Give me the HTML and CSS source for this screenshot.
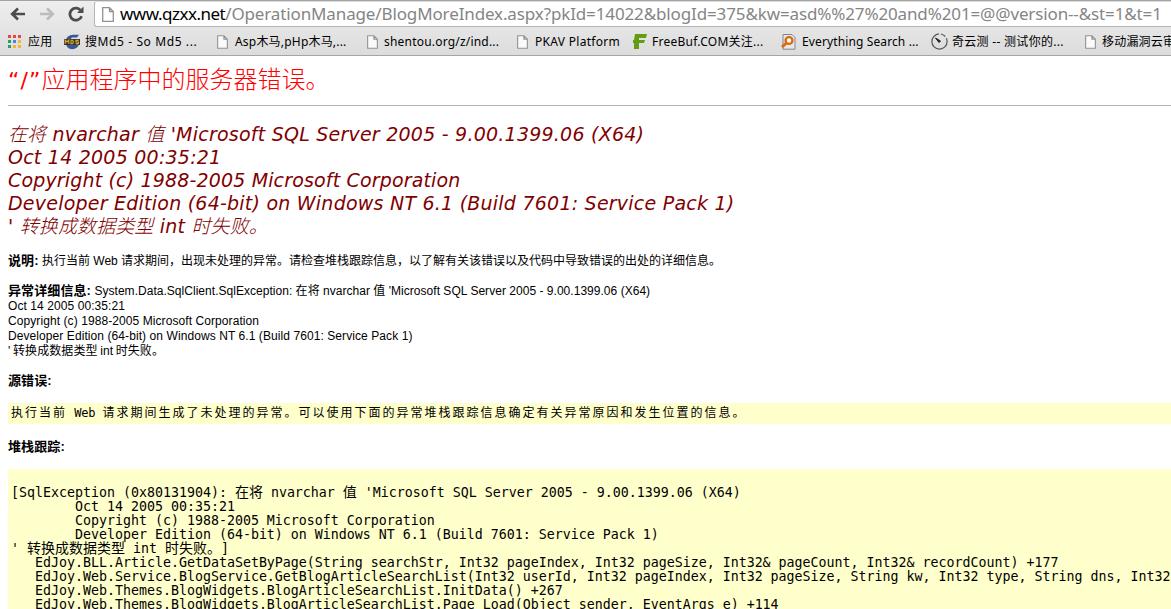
FILE: index.html
```html
<!DOCTYPE html>
<html lang="zh-CN">
<head>
<meta charset="utf-8">
<title>“/”应用程序中的服务器错误。</title>
<link rel="stylesheet" href="styles.css">
</head>
<body>
<header class="chrome">
  <div class="toolbar">
    <svg class="nav back" width="16" height="14" viewBox="0 0 16 14"><path d="M15 7H3M8 1.5L2.2 7L8 12.5" fill="none" stroke="#4c4c4c" stroke-width="2.7"/></svg>
    <svg class="nav forward" width="16" height="14" viewBox="0 0 16 14"><path d="M1 7H13M8 1.5L13.8 7L8 12.5" fill="none" stroke="#bcbcbc" stroke-width="2.7"/></svg>
    <svg class="nav reload" width="16" height="16" viewBox="0 0 16 16"><path d="M13.6 10.2A6 6 0 1 1 12.2 3.9" fill="none" stroke="#4c4c4c" stroke-width="2.8"/><path d="M15.5 .5V7H9Z" fill="#4c4c4c"/></svg>
    <div class="address">
      <svg class="page" width="12" height="15" viewBox="0 0 12 15"><path d="M.7.7H7.5L11.3 4.5V14.3H.7ZM7.5.7V4.5H11.3" fill="#fff" stroke="#929292" stroke-width="1.3"/></svg>
      <div class="url"><span class="host">www.qzxx.net</span><span class="path">/OperationManage/BlogMoreIndex.aspx?pkId=14022&amp;blogId=375&amp;kw=asd%%27%20and%201=@@version--&amp;st=1&amp;t=1</span></div>
    </div>
  </div>
  <nav class="bookmarks">
    <a class="bm apps"><svg width="13" height="13" viewBox="0 0 13 13"><path fill="#e8453c" d="M0 0h3v3H0zM5 0h3v3H5zM10 0h3v3h-3z"/><path fill="#2ca05a" d="M0 5h3v3H0zM0 10h3v3H0z"/><path fill="#4285f4" d="M5 5h3v3H5z"/><path fill="#f9b32f" d="M10 5h3v3h-3zM5 10h3v3H5zM10 10h3v3h-3z"/></svg><span>应用</span></a>
    <a class="bm md5"><svg width="16" height="16" viewBox="0 0 16 16"><path d="M2 6Q3 1 9 .8H15L13 3.5H8L6 6ZM2 10H15Q14 15 8 15.2Q3 15 2 10Z" fill="#35599a"/><path d="M0 5H16V11H0Z" fill="#3b3527"/><path d="M1.2 10V6.2L3 8L4.8 6.2V10M7 6.5V9.6H8.5L9.6 8L8.5 6.4H7M14.6 6.4H12V8H14.4V9.6H11.6" fill="none" stroke="#d9a92f" stroke-width="1.1"/></svg><span>搜Md5 - So Md5 ...</span></a>
    <a class="bm asp"><svg class="page" width="11" height="14" viewBox="0 0 12 15"><path d="M.7.7H7.5L11.3 4.5V14.3H.7ZM7.5.7V4.5H11.3" fill="#fafafa" stroke="#929292" stroke-width="1.2"/></svg><span>Asp木马,pHp木马,...</span></a>
    <a class="bm shentou"><svg class="page" width="11" height="14" viewBox="0 0 12 15"><path d="M.7.7H7.5L11.3 4.5V14.3H.7ZM7.5.7V4.5H11.3" fill="#fafafa" stroke="#929292" stroke-width="1.2"/></svg><span>shentou.org/z/ind...</span></a>
    <a class="bm pkav"><svg class="page" width="11" height="14" viewBox="0 0 12 15"><path d="M.7.7H7.5L11.3 4.5V14.3H.7ZM7.5.7V4.5H11.3" fill="#fafafa" stroke="#929292" stroke-width="1.2"/></svg><span>PKAV Platform</span></a>
    <a class="bm freebuf"><svg width="14" height="15" viewBox="0 0 14 15"><path d="M2 0H14L13 4H6V6H12L11 9H6V15H1V9H0V6H1Z" fill="#649c12"/></svg><span>FreeBuf.COM关注...</span></a>
    <a class="bm everything"><svg width="15" height="16" viewBox="0 0 15 16"><path d="M2 .5H11L14 3.5V15.2H2Z" fill="#e7e7ea" stroke="#858590"/><circle cx="8" cy="6.5" r="3.4" fill="#fff" stroke="#d96c0c" stroke-width="2.4"/><path d="M5.5 9L1 13" stroke="#d96c0c" stroke-width="3"/></svg><span>Everything Search ...</span></a>
    <a class="bm qiyun"><svg width="17" height="17" viewBox="0 0 17 17"><circle cx="8.5" cy="8.5" r="7.6" fill="none" stroke="#555" stroke-width="1.2" stroke-dasharray="35 2 5 2"/><path d="M4.5 5L9.5 8L8 9.5Z" fill="#222" stroke="#222"/></svg><span>奇云测 -- 测试你的...</span></a>
    <a class="bm mobile"><svg class="page" width="11" height="14" viewBox="0 0 12 15"><path d="M.7.7H7.5L11.3 4.5V14.3H.7ZM7.5.7V4.5H11.3" fill="#fafafa" stroke="#929292" stroke-width="1.2"/></svg><span>移动漏洞云审</span></a>
  </nav>
</header>
<main class="content">
  <h1><span class="quote">“/”</span>应用程序中的服务器错误。</h1>
  <h2><span><i>在将</i> nvarchar <i>值</i> 'Microsoft SQL Server 2005 - 9.00.1399.06 (X64)</span><br><span>Oct 14 2005 00:35:21</span><br><span class="tight">Copyright (c) 1988-2005 Microsoft Corporation</span><br><span>Developer Edition (64-bit) on Windows NT 6.1 (Build 7601: Service Pack 1)</span><br><span>' <i>转换成数据类型</i> int <i>时失败。</i></span></h2>
  <p><b>说明:</b> <span class="desc">执行当前 Web 请求期间，出现未处理的异常。请检查堆栈跟踪信息，以了解有关该错误以及代码中导致错误的出处的详细信息。</span></p>
  <p class="details"><b>异常详细信息:</b> <span class="exception">System.Data.SqlClient.SqlException: 在将 nvarchar 值 'Microsoft SQL Server 2005 - 9.00.1399.06 (X64)</span><br><span>Oct 14 2005 00:35:21</span><br><span>Copyright (c) 1988-2005 Microsoft Corporation</span><br><span>Developer Edition (64-bit) on Windows NT 6.1 (Build 7601: Service Pack 1)</span><br><span class="tail">' 转换成数据类型 int 时失败。</span></p>
  <p class="label"><b>源错误:</b></p>
  <div class="source"><span>执行当前 <em>Web</em> 请求期间生成了未处理的异常。可以使用下面的异常堆栈跟踪信息确定有关异常原因和发生位置的信息。</span></div>
  <p class="label"><b>堆栈跟踪:</b></p>
  <pre class="trace">[SqlException (0x80131904): <i>在将</i> nvarchar <i>值</i> 'Microsoft SQL Server 2005 - 9.00.1399.06 (X64)
	Oct 14 2005 00:35:21
	Copyright (c) 1988-2005 Microsoft Corporation
	Developer Edition (64-bit) on Windows NT 6.1 (Build 7601: Service Pack 1)
' <i>转换成数据类型</i> int <i>时失败。</i>]
   EdJoy.BLL.Article.GetDataSetByPage(String searchStr, Int32 pageIndex, Int32 pageSize, Int32&amp; pageCount, Int32&amp; recordCount) +177
   EdJoy.Web.Service.BlogService.GetBlogArticleSearchList(Int32 userId, Int32 pageIndex, Int32 pageSize, String kw, Int32 type, String dns, Int32
   EdJoy.Web.Themes.BlogWidgets.BlogArticleSearchList.InitData() +267
   EdJoy.Web.Themes.BlogWidgets.BlogArticleSearchList.Page_Load(Object sender, EventArgs e) +114</pre>
</main>
</body>
</html>
```
FILE: styles.css
```css
* { box-sizing: border-box; }
body { margin: 0; height: 609px; overflow: hidden; background: #fff; color: #000; text-spacing-trim: space-all; }

.chrome { height: 56px; overflow: hidden; background: linear-gradient(#eeeeee, #dcdcdc); border-top: 1px solid #a3a3a3; border-bottom: 1px solid #a5a5a5; }
.toolbar { display: flex; align-items: center; height: 26px; padding-left: 10px; }
.nav { flex: none; }
.forward { margin-left: 13px; }
.reload { margin-left: 13px; }
.address { display: flex; align-items: center; flex: 1; height: 26px; margin-left: 10px; padding-left: 7px; background: #fff; border: 1px solid #b5b5b5; border-top-color: #ddd; border-right: 0; border-radius: 3px 0 0 3px; overflow: hidden; }
.address .page { flex: none; margin-right: 6px; }
.url { font: 17px/24px "Noto Sans", sans-serif; white-space: nowrap; }
.host { letter-spacing: -.5px; }
.path { color: #858585; letter-spacing: -.13px; }

.bookmarks { display: grid; grid-template-columns: 56px 153px 150px 150px 116px 148px 150px 154px 150px; padding-left: 8px; height: 29px; align-items: center; }
.bm { display: flex; align-items: center; gap: 6px; white-space: nowrap; font: 12px/18px "Noto Sans", "Noto Sans CJK SC", sans-serif; letter-spacing: .2px; }
.bm svg { flex: none; }
.apps { gap: 7px; }
.md5 { gap: 5px; letter-spacing: .6px; }
.asp { gap: 7px; }
.pkav { gap: 7px; letter-spacing: .3px; }
.freebuf { gap: 5px; letter-spacing: .25px; }
.everything { letter-spacing: .12px; }
.qiyun { gap: 4px; letter-spacing: .3px; }

.content { padding-left: 8px; }
h1 { height: 50px; margin: 0; border-bottom: 1px solid #b4b4b4; color: #f00; font: 300 24px/48px "DejaVu Sans", "Noto Sans CJK SC", sans-serif; white-space: nowrap; }
.quote { font-family: "DejaVu Sans", sans-serif; font-weight: 400; font-size: 22px; letter-spacing: 1.1px; }
h2 { margin: 17px 0 16px; color: #800000; font: italic 400 19px/23px "DejaVu Sans", "Noto Sans CJK SC", sans-serif; letter-spacing: .23px; }
h2 i { font-weight: 300; letter-spacing: .1px; }
.tight { letter-spacing: .16px; }
p { margin: 0 0 15px; font: 12px/15px "Liberation Sans", "Noto Sans CJK SC", sans-serif; }
p b { font-size: 13px; line-height: 0; letter-spacing: .1px; }
.details { letter-spacing: .08px; }
.exception { letter-spacing: .03px; }
.tail { word-spacing: -.8px; }
.label { margin-bottom: 14px; }
.source { height: 21px; margin-bottom: 16px; padding-left: 3px; background: #ffc; font: 12px/21px "DejaVu Sans Mono", "Noto Sans CJK SC", monospace; letter-spacing: 2px; word-spacing: -2px; white-space: nowrap; }
.source em { font-style: normal; letter-spacing: -.2px; }
.trace { height: 141px; margin: 0; padding: 17px 0 0 3px; background: #ffc; font: 13.29px/14px "DejaVu Sans Mono", "Noto Sans CJK SC", monospace; overflow: hidden; }
.trace i { font-style: normal; font-size: 14px; line-height: 0; }
```
